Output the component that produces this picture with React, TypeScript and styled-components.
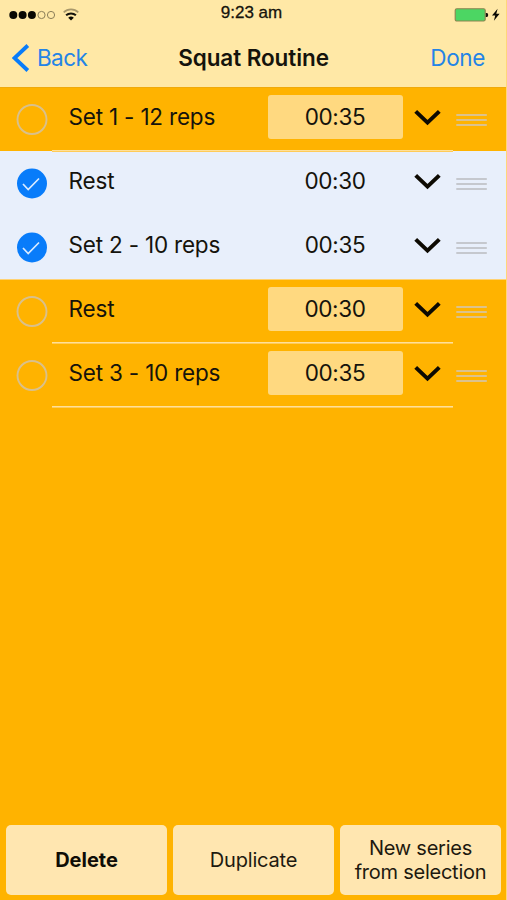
import React from 'react';
import styled, { createGlobalStyle } from 'styled-components';

const GlobalStyle = createGlobalStyle`
  * { box-sizing: border-box; }
  body { margin: 0; background: #ffb300; }
  button { appearance: none; border: 0; padding: 0; background: none; font: inherit; color: inherit; cursor: pointer; }
  svg { display: block; flex: none; }
`;

const Screen = styled.div`
  width: 507px;
  height: 900px;
  display: flex;
  flex-direction: column;
  overflow: hidden;
  background: #ffb300;
  border-right: 1px solid #ffd67a;
  color: #15130c;
  font-family: Inter, 'Liberation Sans', sans-serif;
`;

const Header = styled.header`
  height: 87px;
  flex: none;
  background: #ffe8a6;
  box-shadow: 0 1px #efaa0c;
`;

const StatusBar = styled.div`
  height: 28px;
  display: grid;
  grid-template-columns: 1fr auto 1fr;
  align-items: center;
  padding: 0 6px 0 9px;
`;

const Signal = styled.div`
  display: flex;
  align-items: center;
  gap: 7px;
  padding-top: 1px;
`;

const Clock = styled.time`
  font-family: 'Liberation Sans', sans-serif;
  font-size: 17px;
  line-height: 24px;
  padding-bottom: 2px;
  margin: 0 3px 0 -3px;
  color: #15130c;
  -webkit-text-stroke: 0.3px #15130c;
`;

const Power = styled.div`
  display: flex;
  justify-content: flex-end;
  gap: 3px;
  padding-top: 1px;
`;

const NavBar = styled.nav`
  height: 60px;
  display: grid;
  grid-template-columns: 1fr auto 1fr;
  align-items: center;
  padding: 0 21px 0 12px;
`;

const NavButton = styled.button<{ $end?: boolean }>`
  justify-self: ${(p) => (p.$end ? 'end' : 'start')};
  display: flex;
  align-items: center;
  gap: 7px;
  color: #2484e6;
  font-size: 22.5px;
  line-height: 30px;
  letter-spacing: ${(p) => (p.$end ? '-0.35px' : '-0.6px')};
`;

const Title = styled.h1`
  margin: 0 -5px 0 5px;
  font-size: 22.5px;
  line-height: 30px;
  font-weight: 600;
  letter-spacing: -0.08px;
`;

const List = styled.ul`
  margin: 0;
  padding: 0;
  flex: 1;
  list-style: none;
`;

const Row = styled.li<{ $selected: boolean }>`
  height: 64px;
  display: grid;
  grid-template-columns: 52px 401px 1fr;
  background: ${(p) => (p.$selected ? '#e8effb' : 'transparent')};
  box-shadow: ${(p) => (p.$selected ? '0 1px #ffd272' : 'none')};
`;

const Check = styled.button`
  display: flex;
  padding: 17px 0 0 16px;
`;

const Body = styled.div<{ $line: boolean }>`
  display: flex;
  align-items: flex-start;
  padding: 8px 0 0 16.6px;
  border-bottom: 1px solid ${(p) => (p.$line ? '#ffe09a' : 'transparent')};
  box-shadow: ${(p) => (p.$line ? '0 1px #ffcb58' : 'none')};
`;

const Label = styled.span`
  width: 199.4px;
  font-size: 22.5px;
  line-height: 44px;
  letter-spacing: -0.2px;
  white-space: nowrap;
`;

const Duration = styled.span<{ $selected: boolean }>`
  width: 135px;
  height: 44px;
  border-radius: 3px;
  background: ${(p) => (p.$selected ? 'transparent' : '#ffd980')};
  font-size: 22.5px;
  line-height: 44px;
  letter-spacing: -0.4px;
  text-align: center;
  padding-right: 1px;
`;

const Expand = styled.button`
  padding: 14px 0 0 11px;
`;

const Handle = styled.div`
  padding: 25px 0 0 3px;
`;

const Actions = styled.footer`
  height: 76px;
  flex: none;
  display: grid;
  grid-template-columns: repeat(3, 161px);
  gap: 6px;
  padding: 1px 0 5px 6px;
`;

const Action = styled.button<{ $bold?: boolean; $track: number }>`
  border-radius: 5px;
  background: #ffe6b0;
  color: ${(p) => (p.$bold ? '#0f0d06' : '#1d190f')};
  font-size: 20px;
  line-height: 24px;
  font-weight: ${(p) => (p.$bold ? 700 : 400)};
  letter-spacing: ${(p) => p.$track}px;
  white-space: pre-line;
`;

const ROWS = [
  { label: 'Set 1 - 12 reps', time: '00:35', selected: false },
  { label: 'Rest', time: '00:30', selected: true },
  { label: 'Set 2 - 10 reps', time: '00:35', selected: true },
  { label: 'Rest', time: '00:30', selected: false },
  { label: 'Set 3 - 10 reps', time: '00:35', selected: false },
];

const SignalDots = () => (
  <svg width="47" height="10" viewBox="0 0 47 10">
    {[4.3, 13.6, 22.9].map((x) => <circle key={x} cx={x} cy="5" r="4" fill="#0a0903" />)}
    {[32.5, 42].map((x) => <circle key={x} cx={x} cy="5" r="3.6" fill="none" stroke="#8b7e58" strokeWidth="1" />)}
  </svg>
);

const Wifi = () => (
  <svg width="16" height="13" viewBox="0 0 16 13" fill="none">
    <path d="M.7 4.3a10.6 10.6 0 0 1 14.6 0" stroke="#a9986b" strokeWidth="1.7" />
    <path d="M3.1 7.3a7.2 7.2 0 0 1 9.8 0" stroke="#15130c" strokeWidth="2" />
    <path d="M5.2 9.7a4.1 4.1 0 0 1 5.6 0L8 12.4Z" fill="#0a0903" />
  </svg>
);

const Battery = () => (
  <svg width="35" height="14" viewBox="0 0 35 14">
    <rect x="1.2" y=".7" width="30" height="12.3" rx="1.6" fill="#4cd663" stroke="#8b8350" strokeWidth="1.1" />
    <path d="M31.8 5h1q1.4 0 1.4 2t-1.4 2h-1z" fill="#15130c" />
  </svg>
);

const Bolt = () => (
  <svg width="8" height="14" viewBox="0 0 8 14">
    <path d="M5.6.8 0 7.5h3.2L1.9 12.8 7.6 5.8H4.3z" fill="#0a0903" />
  </svg>
);

const BackChevron = () => (
  <svg width="18" height="28" viewBox="0 0 18 28">
    <path d="M15.8 1.5 2.5 14l13.3 12.5" fill="none" stroke="#087cfa" strokeWidth="3.8" />
  </svg>
);

const CheckIcon = ({ selected }: { selected: boolean }) => (
  <svg width="32" height="32" viewBox="0 0 32 32" fill="none">
    {selected ? (
      <>
        <circle cx="16" cy="15.5" r="15" fill="#087cfa" />
        <path d="m7 16 5.2 5.5L23 10.5" stroke="#d9ebff" strokeWidth="1.7" />
      </>
    ) : (
      <circle cx="16" cy="15.5" r="14.5" stroke="#d9c08c" strokeWidth="1.9" />
    )}
  </svg>
);

const ChevronDown = () => (
  <svg width="28" height="18" viewBox="0 0 28 18">
    <path d="M1.7 2.4 13.5 13.6 25.3 2.4" fill="none" stroke="#0d0a02" strokeWidth="4" />
  </svg>
);

const Grip = ({ selected }: { selected: boolean }) => (
  <svg width="32" height="16" viewBox="0 0 32 16">
    <path d="M.3 3h30.5M.3 8h30.5M.3 13h30.5" stroke={selected ? '#c5c8ce' : '#dcc28c'} strokeWidth="2" />
  </svg>
);

export default function App() {
  return (
    <>
      <GlobalStyle />
      <Screen>
        <Header>
          <StatusBar>
            <Signal><SignalDots /><Wifi /></Signal>
            <Clock>9:23 am</Clock>
            <Power><Battery /><Bolt /></Power>
          </StatusBar>
          <NavBar>
            <NavButton><BackChevron />Back</NavButton>
            <Title>Squat Routine</Title>
            <NavButton $end>Done</NavButton>
          </NavBar>
        </Header>
        <List>
          {ROWS.map((row, i) => (
            <Row key={i} $selected={row.selected}>
              <Check aria-label={`Select ${row.label}`}><CheckIcon selected={row.selected} /></Check>
              <Body $line={!row.selected}>
                <Label>{row.label}</Label>
                <Duration $selected={row.selected}>{row.time}</Duration>
                <Expand aria-label="Expand"><ChevronDown /></Expand>
              </Body>
              <Handle><Grip selected={row.selected} /></Handle>
            </Row>
          ))}
        </List>
        <Actions>
          <Action $bold $track={0}>Delete</Action>
          <Action $track={-0.2}>Duplicate</Action>
          <Action $track={-0.25}>{'New series\nfrom selection'}</Action>
        </Actions>
      </Screen>
    </>
  );
}
